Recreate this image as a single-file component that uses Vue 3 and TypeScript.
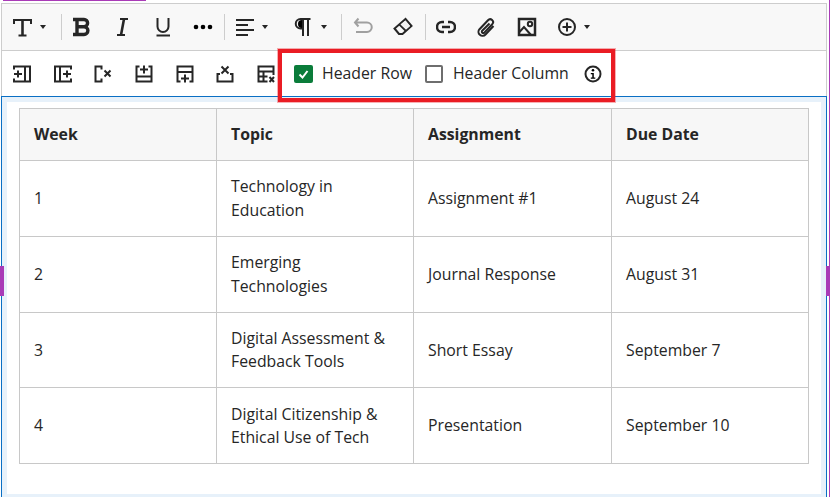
<script setup lang="ts">
const rows = [
  ['1', 'Technology in\nEducation', 'Assignment #1', 'August 24'],
  ['2', 'Emerging\nTechnologies', 'Journal Response', 'August 31'],
  ['3', 'Digital Assessment &\nFeedback Tools', 'Short Essay', 'September 7'],
  ['4', 'Digital Citizenship &\nEthical Use of Tech', 'Presentation', 'September 10'],
]
</script>

<template>
  <div class="page">
    <div class="purple-top"></div>
    <div class="purple-right"></div>
    <div class="handle handle-l"></div>
    <div class="handle handle-r"></div>
    <div class="editor">
      <div class="bar1">
        <button class="btn w-t"><svg width="22" height="22" viewBox="0 0 22 22"><path d="M3 8V4h17v4" class="s" /><path d="M11.500 4v15" class="s stem" /><path d="M7.500 19.500h8" class="s" /></svg><i class="caret"></i></button>
        <span class="sep s1"></span>
        <button class="btn b-b"><svg width="20" height="20" viewBox="0 0 20 20"><path d="M1 2.500h11a3.500 3.500 0 0 1 0 7.200H5M12 9.700a3.900 3.900 0 0 1 0 7.800H1M5 2.500v15" class="s thick" /></svg></button>
        <button class="btn b-i"><svg width="20" height="20" viewBox="0 0 20 20"><path d="M8 2h8M5 18h8" class="s" /><path d="M12 2 9 18" class="s stem" /></svg></button>
        <button class="btn b-u"><svg width="20" height="20" viewBox="0 0 20 20"><path d="M4.500 1v8.500a5.500 5.500 0 0 0 11 0V1M3.500 18.500h13.500" class="s" /></svg></button>
        <button class="btn b-m"><svg width="20" height="20" viewBox="0 0 20 20"><circle cx="3" cy="10" r="2.300" /><circle cx="10" cy="10" r="2.300" /><circle cx="17" cy="10" r="2.300" /></svg></button>
        <span class="sep s2"></span>
        <button class="btn b-a"><svg width="20" height="20" viewBox="0 0 20 20"><path d="M1 3h18M1 8h12M1 13h18M1 18h12" class="s" /></svg><i class="caret"></i></button>
        <button class="btn b-p"><svg width="20" height="20" viewBox="0 0 20 20"><path d="M17.500 2H7.500a4.500 4.500 0 0 0 0 9.500h2M10 2v17M15 2v17" class="s" /><path d="M9 3v8a4 4 0 0 1 0-8z" /></svg><i class="caret"></i></button>
        <span class="sep s3"></span>
        <button class="btn b-un"><svg width="20" height="20" viewBox="0 0 20 20"><path d="M5.500 1.500 2 5.500l3.500 4M2.500 5.500H14a4.200 4.200 0 0 1 0 9.500H3" class="s faded" /></svg></button>
        <button class="btn b-er"><svg width="20" height="20" viewBox="0 0 20 20"><path d="M12.500 2 1.500 11.500l4.500 5.500h3.500L18.500 9z" class="s join" /><path d="M6.500 7.500l6.500 6.500" class="s" /><path d="M12.500 3.500 7.500 7.500l5.500 5 4-3.500z" fill="#f0f0f0" /></svg></button>
        <span class="sep s4"></span>
        <button class="btn b-l"><svg width="20" height="20" viewBox="0 0 20 20"><path d="M8 5H6a5 5 0 0 0 0 10h2M12 5h2a5 5 0 0 1 0 10h-2M6 10h8" class="s link" /></svg></button>
        <button class="btn b-c"><svg width="20" height="20" viewBox="0 0 20 20"><path d="M17.500 9 9.500 17.500a3.900 3.900 0 0 1-6-5.300l8.500-9a2.900 2.900 0 0 1 4.300 3.900l-8 8.500a1.400 1.400 0 0 1-2.100-1.900L13.500 6.500" class="s" /></svg></button>
        <button class="btn b-img"><svg width="20" height="20" viewBox="0 0 20 20"><path d="M2 2h16v16H2z" class="s link" /><path d="M2 15.500l5-5.500 7 8" class="s" /><circle cx="13" cy="7" r="2.200" class="s" /></svg></button>
        <button class="btn b-plus"><svg width="20" height="20" viewBox="0 0 20 20"><circle cx="10" cy="10" r="8" class="s" /><path d="M10 5.500v9M5.500 10h9" class="s" /></svg><i class="caret"></i></button>
      </div>
      <div class="bar2">
        <div class="tbl-icons">
          <svg width="18" height="18" viewBox="0 0 18 18"><path d="M1 4.500V1.500h16v15H1V13.500M12 1.500v15M1 9h8M5 5.500v7" class="s" /></svg>
          <svg width="18" height="18" viewBox="0 0 18 18"><path d="M17 4.500V1.500H1v15h16V13.500M6 1.500v15M9 9h8M13 5.500v7" class="s" /></svg>
          <svg width="18" height="18" viewBox="0 0 18 18"><path d="M7.500 4.500v-3h-6v15h6v-3" class="s" /><path d="M10.500 5.500l6 6M16.500 5.500l-6 6" class="s" /></svg>
          <svg width="18" height="18" viewBox="0 0 18 18"><path d="M4.500 1.500h-3v15h15v-15h-3M1.500 11.500h15M5 4.500h8M9 .500v8" class="s" /></svg>
          <svg width="18" height="18" viewBox="0 0 18 18"><path d="M1.500 13V1.500h15V13M1.500 7h15M1.500 12v4.500h3M16.500 12v4.500h-3M5 13.500h8M9 9.500v8" class="s" /></svg>
          <svg width="18" height="18" viewBox="0 0 18 18"><path d="M4 9H1.500v7.500h15V9H14M5.500 1.500l7 7M12.500 1.500l-7 7" class="s" /></svg>
          <svg width="18" height="18" viewBox="0 0 18 18"><path d="M10.500 16.500h-9v-15h15V10M1.500 6.500h15M1.500 11.500h9M6.500 6.500v10" class="s" /><path d="M12.500 12l4.500 5M17 12l-4.500 5" class="s" /></svg>
        </div>
        <label class="chk on"><svg width="13" height="12" viewBox="0 0 13 12"><path d="M2.500 6.500 5.500 9.500 10.500 3" fill="none" stroke="#fff" stroke-width="2" /></svg></label>
        <span class="lbl l1">Header Row</span>
        <label class="chk off"></label>
        <span class="lbl l2">Header Column</span>
        <svg class="info" width="18" height="18" viewBox="0 0 18 18"><circle cx="9" cy="9" r="7.500" class="s" /><circle cx="9" cy="5.300" r="1.300" /><path d="M6.800 8h3v4.500h1.500v1.200H6.800v-1.200h1.500V9.200H6.800z" /></svg>
      </div>
      <div class="canvas">
        <table>
          <colgroup><col class="col" /><col class="col" /><col class="col wide" /><col class="col" /></colgroup>
          <thead>
            <tr><th>Week</th><th>Topic</th><th>Assignment</th><th>Due Date</th></tr>
          </thead>
          <tbody>
            <tr v-for="r in rows" :key="r[0]">
              <td v-for="(c, i) in r" :key="i">{{ c }}</td>
            </tr>
          </tbody>
        </table>
      </div>
    </div>
    <div class="callout"></div>
  </div>
</template>

<style>
html, body { margin: 0; background: #fff; overflow: hidden; }
</style>

<style scoped>
.page { position: relative; width: 830px; height: 497px; overflow: hidden; background: #fff; font-family: "Open Sans", sans-serif; color: #262626; padding-top: 3px; box-sizing: border-box; }
.purple-top { position: absolute; left: 3px; top: 0; width: 143px; height: 1px; background: #a93bb7; }
.purple-right { position: absolute; right: 0; top: 0; width: 1px; height: 497px; background: #a93bb7; }
.handle { position: absolute; top: 266px; width: 4px; height: 30px; background: #a93bb7; }
.handle-l { left: 0; }
.handle-r { right: 0; }
.editor { margin-left: 1px; width: 826px; height: 496px; box-sizing: border-box; border: 1px solid #cdcdcd; border-bottom: 0; display: flex; flex-direction: column; }
.bar1 { height: 46px; flex: none; background: #f8f8f8; border-bottom: 1px solid #cdcdcd; position: relative; display: flex; align-items: center; box-sizing: content-box; }
.btn { all: unset; display: flex; align-items: center; flex: none; }
.btn svg { display: block; }
.caret { display: block; width: 0; height: 0; border-left: 3px solid transparent; border-right: 3px solid transparent; border-top: 4px solid #262626; }
.s { fill: none; stroke: #262626; stroke-width: 2; }
.s.thick { stroke-width: 3.400; }
.s.stem { stroke-width: 2.600; }
.s.link { stroke-width: 2.500; }
.s.faded { stroke: #a0a0a0; }
.sep { width: 1px; height: 26px; background: #cdcdcd; flex: none; }
.w-t { margin-left: 9px; gap: 7px; }
.s1 { margin-left: 15px; }
.b-b { margin-left: 10px; }
.b-i { margin-left: 20px; }
.b-u { margin-left: 21px; }
.b-m { margin-left: 20px; }
.s2 { margin-left: 11px; }
.b-a { margin-left: 10px; gap: 7px; }
.b-p { margin-left: 25px; gap: 8px; }
.s3 { margin-left: 14px; }
.b-un { margin-left: 11px; }
.b-er { margin-left: 20px; }
.s4 { margin-left: 12px; }
.b-l { margin-left: 10px; }
.b-c { margin-left: 20px; }
.b-img { margin-left: 21px; }
.b-plus { margin-left: 20px; gap: 7px; }
.bar2 { height: 45px; flex: none; background: #fff; display: flex; align-items: center; }
.tbl-icons { margin-left: 11px; display: flex; gap: 22.700px; width: 268px; flex: none; }
.tbl-icons svg { flex: none; }
.chk { display: block; width: 18px; height: 18px; box-sizing: border-box; border-radius: 2px; flex: none; }
.chk.on { background: #0a7c3a; width: 19px; margin-left: 13px; padding: 3px; }
.chk.on svg { display: block; }
.chk.off { border: 2px solid #6e6e6e; margin-left: 13px; }
.lbl { font-size: 15.800px; line-height: 22px; color: #262626; flex: none; margin-bottom: 1px; }
.l1 { margin-left: 9px; }
.l2 { margin-left: 10px; }
.info { margin-left: 15px; flex: none; }
.canvas { flex: 1; border: 1px solid #0a6fc4; border-bottom: 0; box-shadow: inset 0 0 0 5px #e7f1fa; padding: 11px 17px 0; box-sizing: border-box; margin: 0 -1px 0 -1px; }
table { border-collapse: collapse; table-layout: fixed; width: 789px; font-size: 15.800px; line-height: 23.400px; }
.col { width: 197px; }
.col.wide { width: 198px; }
th, td { border: 1px solid #c8c8c8; text-align: left; vertical-align: middle; color: #262626; white-space: pre-line; box-sizing: border-box; padding: 1px 14px 0; }
th { background: #f7f7f7; font-weight: 700; height: 52px; }
td { height: 75.750px; }
.callout { position: absolute; left: 278px; top: 49px; width: 337px; height: 53px; box-sizing: border-box; border: 4px solid #ea1c24; box-shadow: 0 0 0 1px rgba(234, 28, 36, 0.35); }
</style>
